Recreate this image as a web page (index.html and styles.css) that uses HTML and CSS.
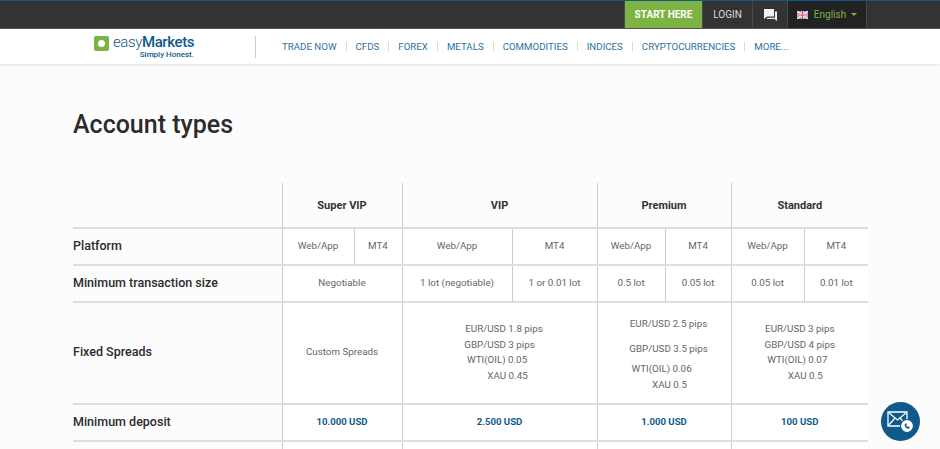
FILE: index.html
```html
<!doctype html>
<html>
<head>
	<title>Account types</title>
	<link rel="stylesheet" href="styles.css">
</head>
<body>
<div class="topbar">
	<a class="start-here">START HERE</a>
	<a class="login">LOGIN</a>
	<a class="chat">
		<svg width="13" height="12" viewBox="0 0 13 12"><path d="M0 0h10v7.5H3L0 10z" fill="#f2f2f2"/><path d="M11 2.5h2V12l-2.5-2H3V8.700h8z" fill="#f2f2f2"/></svg>
	</a>
	<a class="lang">
		<svg class="flag" width="11" height="8" viewBox="0 0 11 8"><rect width="11" height="8" fill="#8f8fc8"/><path d="M0 0l11 8M11 0L0 8" stroke="#f3e6ea" stroke-width="1.500"/><path d="M5.500 0v8M0 4h11" stroke="#f3e6ea" stroke-width="2.500"/><path d="M5.500 0v8M0 4h11" stroke="#d9506a" stroke-width="1.200"/></svg>
		English
		<span class="caret"></span>
	</a>
</div>
<div class="navbar">
	<div class="logo">
		<span class="logo-mark"><span class="logo-dot"></span></span>
		<div class="logo-text">
			<div class="logo-name">easy<b>Markets</b></div>
			<div class="logo-tag">Simply Honest.</div>
		</div>
	</div>
	<ul class="menu">
		<li>TRADE NOW</li>
		<li>CFDS</li>
		<li>FOREX</li>
		<li>METALS</li>
		<li>COMMODITIES</li>
		<li>INDICES</li>
		<li>CRYPTOCURRENCIES</li>
		<li>MORE...</li>
	</ul>
</div>
<div class="content">
	<h1>Account types</h1>
	<table class="accounts">
		<colgroup>
			<col class="c-label"><col class="c1"><col class="c2"><col class="c3"><col class="c4"><col class="c5"><col class="c6"><col class="c7"><col class="c8">
		</colgroup>
		<tr class="head">
			<th class="blank"></th>
			<th colspan="2">Super VIP</th>
			<th colspan="2">VIP</th>
			<th colspan="2">Premium</th>
			<th colspan="2">Standard</th>
		</tr>
		<tr class="short">
			<th>Platform</th>
			<td>Web/App</td><td>MT4</td><td>Web/App</td><td>MT4</td><td>Web/App</td><td>MT4</td><td>Web/App</td><td>MT4</td>
		</tr>
		<tr class="short">
			<th>Minimum transaction size</th>
			<td colspan="2">Negotiable</td><td>1 lot (negotiable)</td><td>1 or 0.01 lot</td><td>0.5 lot</td><td>0.05 lot</td><td>0.05 lot</td><td>0.01 lot</td>
		</tr>
		<tr class="spreads">
			<th>Fixed Spreads</th>
			<td colspan="2">Custom Spreads</td>
			<td colspan="2"><span class="pair">EUR/USD 1.8 pips</span><br>GBP/USD 3 pips<br><span class="wti">WTI(OIL) 0.05</span><br><span class="xau">XAU 0.45</span></td>
			<td colspan="2" class="premium">
				<p class="pair">EUR/USD 2.5 pips</p>
				<p class="pair">GBP/USD 3.5 pips</p>
				<p><span class="wti">WTI(OIL) 0.06</span><br><span class="xau-short">XAU 0.5</span></p>
			</td>
			<td colspan="2">EUR/USD 3 pips<br>GBP/USD 4 pips<br><span class="wti">WTI(OIL) 0.07</span><br><span class="xau-short">XAU 0.5</span></td>
		</tr>
		<tr class="short deposit">
			<th>Minimum deposit</th>
			<td colspan="2">10.000 USD</td><td colspan="2">2.500 USD</td><td colspan="2">1.000 USD</td><td colspan="2">100 USD</td>
		</tr>
		<tr class="short">
			<th></th>
			<td colspan="2"></td><td colspan="2"></td><td colspan="2"></td><td colspan="2"></td>
		</tr>
	</table>
</div>
<a class="contact">
	<svg width="28" height="24" viewBox="0 0 28 24">
		<path d="M1 2h19v14H1z" fill="none" stroke="#fff" stroke-width="1.300"/>
		<path d="M1.500 2.500L10.500 10l9-7.500M1.500 15.500l6.500-7.500M19.500 15.500l-6.500-7.500" fill="none" stroke="#fff" stroke-width="1.200"/>
		<circle cx="20" cy="16" r="6.500" fill="#fff" stroke="#0f5a8a" stroke-width="1.200"/>
		<path d="M17.500 15c.5 2.500 2 3.800 4.300 3.800l1-1.500-1.600-1-.8.600c-.6-.4-1-.9-1.200-1.600l.7-.7-1-1.700z" fill="#0f5a8a"/>
	</svg>
</a>
</body>
</html>
```

FILE: styles.css
```css
* {
	margin: 0;
	padding: 0;
	box-sizing: border-box;
}

html, body {
	height: 449px;
	overflow: hidden;
}

body {
	font: 10px Roboto, Arial, sans-serif;
	color: #666;
	background: #fcfcfc;
}

.topbar {
	display: flex;
	justify-content: flex-end;
	height: 29px;
	padding-right: 73px;
	background: #333;
	border-top: 1px solid #0f5a8a;
	border-bottom: 1px solid #555;
	color: #ddd;
	font-size: 10px;
}

.topbar a {
	display: flex;
	align-items: center;
	justify-content: center;
	border-left: 1px solid #4a4a4a;
}

.start-here {
	width: 78px;
	background: #7cb342;
	color: #fff;
	font-weight: 700;
}

.login {
	width: 50px;
}

.chat {
	width: 35px;
}

.lang {
	width: 80px;
	gap: 5px;
	background: #222;
	color: #7cb342;
	border-right: 1px solid #4a4a4a;
}

.flag {
	margin-right: 1px;
}

.caret {
	border: 3px solid transparent;
	border-top-color: #7cb342;
	border-bottom: 0;
}

.navbar {
	display: flex;
	align-items: center;
	height: 35px;
	padding-left: 94px;
	background: #fff;
	box-shadow: 0 1px 3px rgba(0, 0, 0, .12);
}

.logo {
	display: flex;
	width: 161px;
	height: 24px;
	gap: 4px;
}

.logo-mark {
	display: flex;
	align-items: center;
	justify-content: center;
	width: 15px;
	height: 15px;
	margin-top: 1px;
	background: #7cb342;
	border-radius: 2px;
}

.logo-dot {
	width: 7px;
	height: 7px;
	background: #fff;
	border-radius: 50%;
}

.logo-text {
	width: 81px;
	color: #0f5a8a;
}

.logo-name {
	font: 300 15px/14px Roboto, Arial, sans-serif;
	letter-spacing: -.4px;
	white-space: nowrap;
}

.logo-name b {
	font-weight: 500;
}

.logo-tag {
	margin-top: 2px;
	font: 500 8px/8px Roboto, Arial, sans-serif;
	text-align: right;
}

.menu {
	display: flex;
	align-items: center;
	height: 22px;
	list-style: none;
	border-left: 1px solid #ccc;
	padding-left: 26px;
	color: #2f6f9c;
	font-size: 9.700px;
}

.menu li + li {
	margin-left: 9px;
	padding-left: 9px;
	border-left: 1px solid #cfe3b5;
	line-height: 9px;
}

.content {
	padding: 46px 73px 0;
}

h1 {
	font: 500 25px/30px Roboto, Arial, sans-serif;
	color: #2b2b2b;
	margin-bottom: 43px;
}

.accounts {
	width: 795px;
	table-layout: fixed;
	border-collapse: collapse;
}

.c-label { width: 209px; }
.c1 { width: 72px; }
.c2 { width: 48px; }
.c3 { width: 110px; }
.c4 { width: 85px; }
.c5 { width: 68px; }
.c6 { width: 66px; }
.c7 { width: 73px; }
.c8 { width: 64px; }

.accounts th, .accounts td {
	border: 1px solid #ccc;
	border-top: 2px solid #ddd;
	padding-bottom: 2px;
	text-align: center;
	vertical-align: middle;
	font-size: 9.800px;
	font-weight: 400;
	line-height: 15.500px;
}

.accounts tr > :first-child {
	border-left: 0;
	text-align: left;
	font-size: 12.500px;
	font-weight: 500;
	color: #2b2b2b;
}

.accounts tr > :last-child {
	border-right: 0;
}

.accounts td {
	background: #fff;
}

.head th {
	height: 45px;
	border-top: 0;
	font-weight: 700;
	color: #333;
}

.accounts .head th {
	padding: 2px 0 0;
	font-size: 11px;
}

.short > * {
	height: 37px;
}

.spreads > * {
	height: 102px;
}

.pair {
	padding-left: 9px;
}

.wti {
	padding-right: 5px;
}

.xau {
	padding-left: 16px;
}

.xau-short {
	padding-left: 11px;
}

.accounts .premium {
	padding-top: 4.500px;
}

.premium p {
	margin-bottom: 9.500px;
}

.premium p + p {
	margin-bottom: 4.500px;
}

.premium p:last-child {
	margin-bottom: 0;
}

.accounts .deposit td {
	color: #0f5a8a;
	font-size: 9.600px;
	font-weight: 700;
}

.contact {
	position: absolute;
	left: 881px;
	top: 402px;
	display: flex;
	align-items: center;
	justify-content: center;
	width: 39px;
	height: 39px;
	background: #0f5a8a;
	border-radius: 50%;
}
```
